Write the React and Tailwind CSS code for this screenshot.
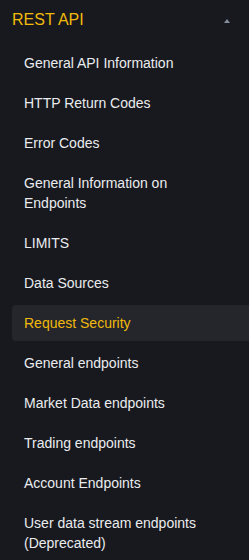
const items = [
  'General API Information',
  'HTTP Return Codes',
  'Error Codes',
  'General Information on Endpoints',
  'LIMITS',
  'Data Sources',
  'Request Security',
  'General endpoints',
  'Market Data endpoints',
  'Trading endpoints',
  'Account Endpoints',
  'User data stream endpoints (Deprecated)',
];

export default function App() {
  const active = 'Request Security';

  return (
    <div className="w-[249px] h-[560px] overflow-hidden bg-[#18191e] font-['Liberation_Sans',Arial,sans-serif]">
      {/* Section header */}
      <div className="flex items-center justify-between h-10 pl-3 pr-[19px]">
        <span className="text-[16px] leading-5 text-[#f0b90b]">REST API</span>
        <svg width="6" height="4" viewBox="0 0 6 4" className="mt-[2px]">
          <path d="M3 0L6 4H0Z" fill="#848e9c" />
        </svg>
      </div>

      {/* Items */}
      <ul className="flex flex-col gap-1 pt-[5px] pl-3">
        {items.map((label) => (
          <li
            key={label}
            className={
              label === active
                ? 'rounded-l py-2 pl-3 pr-4 text-[14px] leading-5 bg-[#24262b] text-[#f0b90b]'
                : 'rounded-l py-2 pl-3 pr-4 text-[14px] leading-5 text-[#eaecef]'
            }
          >
            {label}
          </li>
        ))}
      </ul>
    </div>
  );
}
